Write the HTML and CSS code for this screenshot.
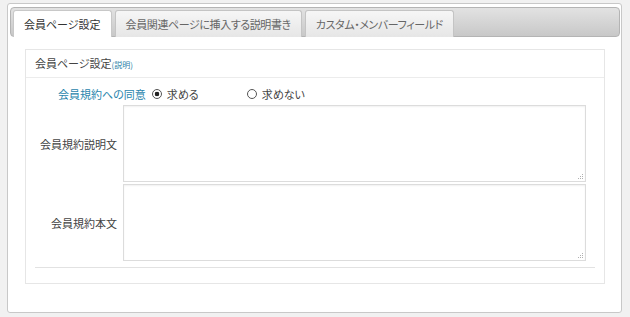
FILE: index.html
```html
<!DOCTYPE html>
<html lang="ja">
<head>
    <meta charset="UTF-8">
    <meta name="viewport" content="width=device-width, initial-scale=1.0">
    <title>会員ページ設定</title>
    <link rel="stylesheet" href="styles.css">
</head>
<body>

    <div id="container">
        <ul class="tabs">
            <li class="tab active">会員ページ設定</li>
            <li class="tab">会員関連ページに挿入する説明書き</li>
            <li class="tab">カスタム・メンバーフィールド</li>
        </ul>

        <div class="panel">
            <h3 class="panel-title">会員ページ設定<a href="#" class="help">(説明)</a></h3>
            <div class="panel-body">
                <div class="row-agree">
                    <span class="agree-label">会員規約への同意</span>
                    <label class="choice"><input type="radio" name="agree" checked> 求める</label>
                    <label class="choice"><input type="radio" name="agree"> 求めない</label>
                </div>
                <div class="field">
                    <label class="field-label" for="desc">会員規約説明文</label>
                    <textarea id="desc"></textarea>
                </div>
                <div class="field">
                    <label class="field-label" for="terms">会員規約本文</label>
                    <textarea id="terms"></textarea>
                </div>
                <hr class="divider">
            </div>
        </div>
    </div>

</body>
</html>
```

FILE: styles.css
```css
body {
    margin: 0;
    padding: 0;
    background-color: #f1f1f1;
    font-family: "Noto Sans CJK JP", sans-serif;
    font-size: 11px;
    font-feature-settings: "palt";
    color: #444;
}
#container {
    box-sizing: border-box;
    width: 615px;
    margin: 3px 0 0 7px;
    padding: 3px 1px 28px 2px;
    background: #fff;
    border: 1px solid #c8c8c8;
    border-radius: 3px;
}
.tabs {
    box-sizing: border-box;
    display: flex;
    align-items: flex-end;
    gap: 3px;
    height: 30px;
    margin: 0;
    padding: 2px 0 0 2px;
    list-style: none;
    border: 1px solid #b4b4b4;
    border-radius: 4px;
    background: linear-gradient(#e2e2e2, #c8c8c8);
}
.tab {
    box-sizing: border-box;
    height: 27px;
    margin-bottom: -1px;
    padding: 0 10px;
    line-height: 26px;
    letter-spacing: -0.4px;
    color: #666;
    border: 1px solid #c4c4c4;
    border-bottom: none;
    border-radius: 3px 3px 0 0;
    background: linear-gradient(#f6f6f6, #e6e6e6);
    white-space: nowrap;
}
.tab.active {
    letter-spacing: 0;
    color: #333;
    background: #fff;
    border-color: #c8c8c8;
}
.panel {
    margin: 12px 15px 0 15px;
    border: 1px solid #e6e6e6;
}
.panel-title {
    margin: 0;
    padding-left: 9px;
    height: 27px;
    line-height: 27px;
    font-size: 11px;
    font-weight: normal;
    color: #444;
    border-bottom: 1px solid #ececec;
}
.help {
    font-size: 8px;
    color: #2a82a8;
    text-decoration: none;
}
.panel-body {
    padding: 6px 9px 15px 9px;
}
.row-agree {
    display: flex;
    align-items: center;
    height: 20px;
    padding-left: 23px;
}
.agree-label {
    color: #2a86ad;
    margin-right: 6px;
}
.choice {
    display: flex;
    align-items: center;
    width: 95px;
}
.choice input {
    appearance: none;
    box-sizing: border-box;
    width: 10px;
    height: 10px;
    margin: 0 5px 0 0;
    border: 1px solid #555;
    border-radius: 50%;
    background: #fff;
}
.choice input:checked {
    background: radial-gradient(circle, #222 0, #222 2px, #fff 2.6px);
}
.field {
    display: flex;
    align-items: center;
    margin-top: 1px;
}
.field + .field {
    margin-top: 2px;
}
.field-label {
    width: 82px;
    margin-right: 6px;
    text-align: right;
}
textarea {
    box-sizing: border-box;
    width: 463px;
    height: 77px;
    margin: 0;
    padding: 3px;
    resize: none;
    border: 1px solid #dcdcdc;
    box-shadow: inset 0 1px 2px rgba(0, 0, 0, 0.06);
    background-color: #fff;
    /* つまみの点々 */
    background-image:
        linear-gradient(#b0b0b0, #b0b0b0),
        linear-gradient(#b0b0b0, #b0b0b0),
        linear-gradient(#b0b0b0, #b0b0b0),
        linear-gradient(#b0b0b0, #b0b0b0),
        linear-gradient(#b0b0b0, #b0b0b0),
        linear-gradient(#b0b0b0, #b0b0b0);
    background-size: 1px 1px;
    background-repeat: no-repeat;
    background-position:
        right 2px bottom 6px,
        right 4px bottom 4px,
        right 2px bottom 4px,
        right 6px bottom 2px,
        right 4px bottom 2px,
        right 2px bottom 2px;
}
.divider {
    margin: 6px 0 0 0;
    border: none;
    border-top: 1px solid #e2e2e2;
}
```
